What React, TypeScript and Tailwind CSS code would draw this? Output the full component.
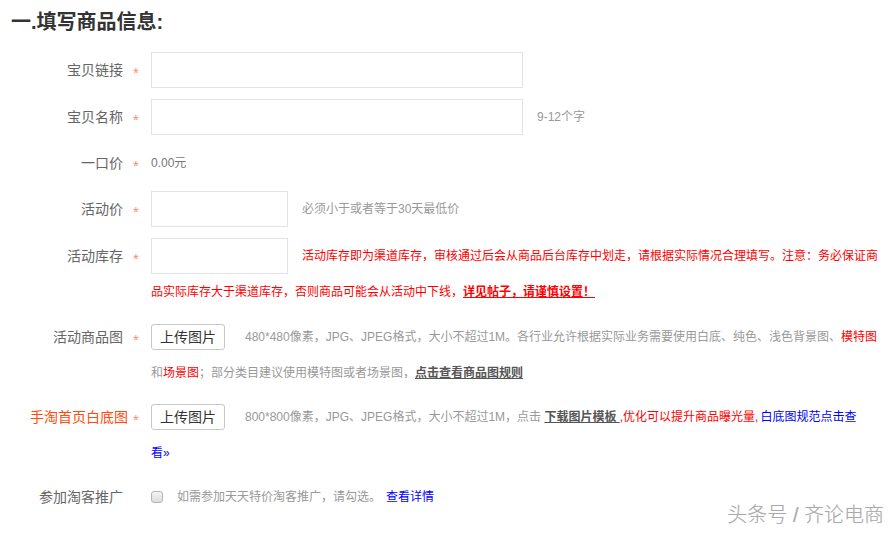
import type { ReactNode } from 'react';

const font = { fontFamily: '"Liberation Sans", "Noto Sans CJK SC", sans-serif' };

function Row({
  label,
  required = true,
  labelClass = 'text-[#666] pr-[5px]',
  className = '',
  children,
}: {
  label: string;
  required?: boolean;
  labelClass?: string;
  className?: string;
  children: ReactNode;
}) {
  return (
    <div className={`flex items-start ${className}`}>
      <div className={`w-[128px] shrink-0 whitespace-nowrap text-right text-[14px] leading-[36px] ${labelClass}`}>
        {label}
      </div>
      <div className="h-[36px] w-[23px] shrink-0 pl-[5px] pt-[3px] text-[15px] leading-[36px] text-[#ff8a70]">
        {required ? '*' : ''}
      </div>
      <div className="min-w-0 flex-1 text-[12px] leading-[36px]">{children}</div>
    </div>
  );
}

function UploadButton() {
  return (
    <button className="h-[26px] w-[74px] shrink-0 rounded-[3px] border border-[#c8c8c8] bg-white text-[14px] leading-[24px] text-[#333]">
      上传图片
    </button>
  );
}

export default function App() {
  return (
    <div className="relative h-[533px] w-[894px] overflow-hidden bg-white" style={font}>
      <div className="pt-[8px]">
        <h1 className="mb-[16px] pl-[11px] text-[20px] font-bold leading-[28px] text-[#333]">一.填写商品信息:</h1>

        <Row label="宝贝链接" className="mb-[11px]">
          <input className="block h-[36px] w-[372px] border border-[#e3e3e3] outline-none" />
        </Row>

        <Row label="宝贝名称" className="mb-[10px]">
          <div className="flex items-center">
            <input className="block h-[36px] w-[372px] border border-[#e3e3e3] outline-none" />
            <span className="ml-[14px] text-[#999]">9-12个字</span>
          </div>
        </Row>

        <Row label="一口价" className="mb-[10px]">
          <span className="text-[#777]">0.00元</span>
        </Row>

        <Row label="活动价" className="mb-[11px]">
          <div className="flex items-center">
            <input className="block h-[36px] w-[137px] border border-[#e3e3e3] outline-none" />
            <span className="ml-[14px] text-[#999]">必须小于或者等于30天最低价</span>
          </div>
        </Row>

        <Row label="活动库存" className="mb-[9px]">
          <div className="flex items-center whitespace-nowrap">
            <input className="block h-[36px] w-[137px] border border-[#e3e3e3] outline-none" />
            <span className="ml-[14px] text-[#f00]">
              活动库存即为渠道库存，审核通过后会从商品后台库存中划走，请根据实际情况合理填写。注意：务必保证商
            </span>
          </div>
          <div className="whitespace-nowrap text-[#f00]">
            品实际库存大于渠道库存，否则商品可能会从活动中下线，
            <a className="font-bold underline">详见帖子，请谨慎设置！</a>
          </div>
        </Row>

        <Row label="活动商品图" className="mb-[8px]">
          <div className="flex items-center whitespace-nowrap">
            <UploadButton />
            <span className="ml-[20px] text-[#999]">
              480*480像素，JPG、JPEG格式，大小不超过1M。各行业允许根据实际业务需要使用白底、纯色、浅色背景图、
              <span className="text-[#f00]">模特图</span>
            </span>
          </div>
          <div className="whitespace-nowrap text-[#999]">
            和<span className="text-[#f00]">场景图</span>；部分类目建议使用模特图或者场景图，
            <a className="font-bold text-[#555] underline">点击查看商品图规则</a>
          </div>
        </Row>

        <Row label="手淘首页白底图" labelClass="text-[#ff4a0a]" className="mb-[8px]">
          <div className="flex items-center whitespace-nowrap">
            <UploadButton />
            <span className="ml-[20px] text-[#999]">
              800*800像素，JPG、JPEG格式，大小不超过1M，点击{' '}
              <a className="font-bold text-[#555] underline">下载图片模板 </a>
              <span className="text-[#f00]">,优化可以提升商品曝光量,</span>
              <a className="ml-[2px] text-[#00f]">白底图规范点击查</a>
            </span>
          </div>
          <div className="text-[#00f]">看»</div>
        </Row>

        <Row label="参加淘客推广" required={false}>
          <div className="flex items-center whitespace-nowrap">
            <span className="block h-[12px] w-[12px] rounded-[3px] border border-[#b5b5b5] bg-gradient-to-b from-[#f4f4f4] to-[#dcdcdc]" />
            <span className="ml-[14px] text-[#999]">如需参加天天特价淘客推广，请勾选。</span>
            <a className="ml-[5px] text-[#00f]">查看详情</a>
          </div>
        </Row>
      </div>

      <div
        className="absolute bottom-[4px] right-[10px] text-[20px] font-light leading-[28px] text-[#aaa]"
        style={{ textShadow: '0 0 1px #ddd' }}
      >
        头条号 / 齐论电商
      </div>
    </div>
  );
}
